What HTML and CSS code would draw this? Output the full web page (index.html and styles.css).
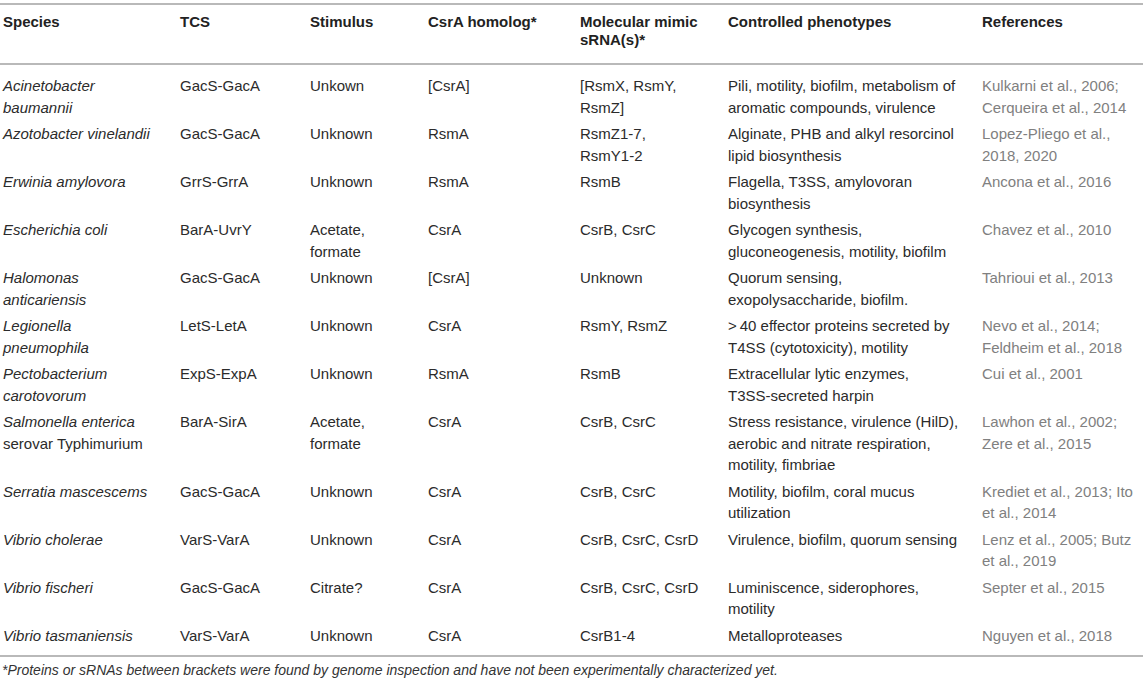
FILE: index.html
```html
<!DOCTYPE html>
<html>
<head>
<meta charset="utf-8">
<link rel="stylesheet" href="styles.css">
</head>
<body>
<div class="wrap">
<table class="tbl">
<colgroup>
<col class="c1"><col class="c2"><col class="c3"><col class="c4"><col class="c5"><col class="c6"><col class="c7">
</colgroup>
<thead>
<tr><th>Species</th><th>TCS</th><th>Stimulus</th><th>CsrA homolog*</th><th>Molecular mimic<br>sRNA(s)*</th><th>Controlled phenotypes</th><th>References</th></tr>
</thead>
<tbody>
<tr><td><i>Acinetobacter<br>baumannii</i></td><td>GacS-GacA</td><td>Unkown</td><td>[CsrA]</td><td>[RsmX, RsmY,<br>RsmZ]</td><td>Pili, motility, biofilm, metabolism of<br>aromatic compounds, virulence</td><td class="ref">Kulkarni et al., 2006;<br>Cerqueira et al., 2014</td></tr>
<tr><td><i>Azotobacter vinelandii</i></td><td>GacS-GacA</td><td>Unknown</td><td>RsmA</td><td>RsmZ1-7,<br>RsmY1-2</td><td>Alginate, PHB and alkyl resorcinol<br>lipid biosynthesis</td><td class="ref">Lopez-Pliego et al.,<br>2018, 2020</td></tr>
<tr><td><i>Erwinia amylovora</i></td><td>GrrS-GrrA</td><td>Unknown</td><td>RsmA</td><td>RsmB</td><td>Flagella, T3SS, amylovoran<br>biosynthesis</td><td class="ref">Ancona et al., 2016</td></tr>
<tr><td><i>Escherichia coli</i></td><td>BarA-UvrY</td><td>Acetate,<br>formate</td><td>CsrA</td><td>CsrB, CsrC</td><td>Glycogen synthesis,<br>gluconeogenesis, motility, biofilm</td><td class="ref">Chavez et al., 2010</td></tr>
<tr><td><i>Halomonas<br>anticariensis</i></td><td>GacS-GacA</td><td>Unknown</td><td>[CsrA]</td><td>Unknown</td><td>Quorum sensing,<br>exopolysaccharide, biofilm.</td><td class="ref">Tahrioui et al., 2013</td></tr>
<tr><td><i>Legionella<br>pneumophila</i></td><td>LetS-LetA</td><td>Unknown</td><td>CsrA</td><td>RsmY, RsmZ</td><td>&gt;&#8201;40 effector proteins secreted by<br>T4SS (cytotoxicity), motility</td><td class="ref">Nevo et al., 2014;<br>Feldheim et al., 2018</td></tr>
<tr><td><i>Pectobacterium<br>carotovorum</i></td><td>ExpS-ExpA</td><td>Unknown</td><td>RsmA</td><td>RsmB</td><td>Extracellular lytic enzymes,<br>T3SS-secreted harpin</td><td class="ref">Cui et al., 2001</td></tr>
<tr><td><i>Salmonella enterica</i><br>serovar Typhimurium</td><td>BarA-SirA</td><td>Acetate,<br>formate</td><td>CsrA</td><td>CsrB, CsrC</td><td>Stress resistance, virulence (HilD),<br>aerobic and nitrate respiration,<br>motility, fimbriae</td><td class="ref">Lawhon et al., 2002;<br>Zere et al., 2015</td></tr>
<tr><td><i>Serratia mascescems</i></td><td>GacS-GacA</td><td>Unknown</td><td>CsrA</td><td>CsrB, CsrC</td><td>Motility, biofilm, coral mucus<br>utilization</td><td class="ref">Krediet et al., 2013; Ito<br>et al., 2014</td></tr>
<tr><td><i>Vibrio cholerae</i></td><td>VarS-VarA</td><td>Unknown</td><td>CsrA</td><td>CsrB, CsrC, CsrD</td><td>Virulence, biofilm, quorum sensing</td><td class="ref">Lenz et al., 2005; Butz<br>et al., 2019</td></tr>
<tr><td><i>Vibrio fischeri</i></td><td>GacS-GacA</td><td>Citrate?</td><td>CsrA</td><td>CsrB, CsrC, CsrD</td><td>Luminiscence, siderophores,<br>motility</td><td class="ref">Septer et al., 2015</td></tr>
<tr><td><i>Vibrio tasmaniensis</i></td><td>VarS-VarA</td><td>Unknown</td><td>CsrA</td><td>CsrB1-4</td><td>Metalloproteases</td><td class="ref">Nguyen et al., 2018</td></tr>
</tbody>
</table>
<p class="note">*Proteins or sRNAs between brackets were found by genome inspection and have not been experimentally characterized yet.</p>
</div>
</body>
</html>
```
FILE: styles.css
```css
html, body {
  margin: 0;
  padding: 0;
  background: #ffffff;
}
body {
  font-family: "Liberation Sans", Arial, sans-serif;
  color: #2b2b2b;
}
.wrap {
  padding-top: 3px;
}
.tbl {
  width: 1143px;
  border-collapse: collapse;
  table-layout: fixed;
  font-size: 15px;
}
.c1 { width: 177px; }
.c2 { width: 130px; }
.c3 { width: 118px; }
.c4 { width: 152px; }
.c5 { width: 148px; }
.c6 { width: 254px; }
.c7 { width: 164px; }
.tbl thead tr {
  border-top: 2px solid #b9b9b9;
  border-bottom: 2px solid #b9b9b9;
}
.tbl th {
  text-align: left;
  vertical-align: top;
  font-weight: bold;
  color: #222;
  line-height: 18px;
  padding: 8px 0 14px 3px;
  white-space: nowrap;
}
.tbl td {
  vertical-align: top;
  line-height: 21.5px;
  padding: 2px 0 3px 3px;
  white-space: nowrap;
}
.tbl tbody tr:first-child td {
  padding-top: 10px;
}
.tbl tbody tr:last-child td {
  padding-bottom: 9px;
}
.tbl tbody tr:last-child {
  border-bottom: 2px solid #b9b9b9;
}
.tbl td.ref {
  color: #808080;
}
.note {
  margin: 5px 0 0 2px;
  font-size: 14px;
  font-style: italic;
  color: #333;
}
```
